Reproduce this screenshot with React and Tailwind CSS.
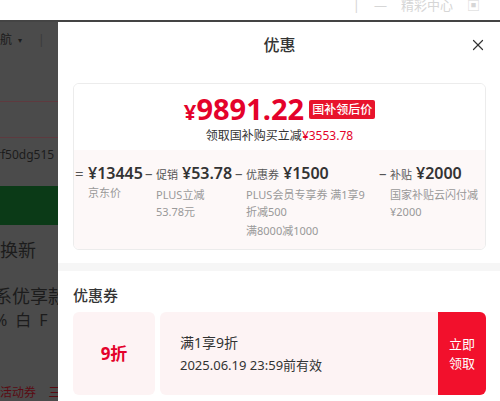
import { X } from 'lucide-react';

const font = { fontFamily: '"Noto Sans", "Noto Sans CJK SC", sans-serif' };

const parts = [
  {
    sign: '=',
    label: null,
    value: '¥13445',
    width: 'w-[56px]',
    notes: ['京东价'],
  },
  {
    sign: '–',
    label: '促销',
    value: '¥53.78',
    width: 'w-[78px]',
    notes: ['PLUS立减', '53.78元'],
  },
  {
    sign: '–',
    label: '优惠券',
    value: '¥1500',
    width: 'w-[132px]',
    notes: ['PLUS会员专享券 满1享9折减500'],
    extra: '满8000减1000',
  },
  {
    sign: '–',
    label: '补贴',
    value: '¥2000',
    width: 'w-[95px]',
    notes: ['国家补贴云闪付减', '¥2000'],
  },
];

function PageBehind() {
  return (
    <div className="flex w-[58px] shrink-0 flex-col overflow-hidden whitespace-nowrap bg-[#4b4b4b] text-[#1c1c1c]">
      <div className="flex h-[36px] items-center gap-[6px] pt-[1px] text-[12px]">
        <span>航</span>
        <span className="text-[8px]">▾</span>
        <span className="ml-[10px] text-[#3a3a3a]">|</span>
        <span className="ml-[8px]">号</span>
      </div>
      <div className="h-[44px]" />
      <div className="h-[1px] bg-[#5e3a3f]" />
      <div className="h-[35px]" />
      <div className="h-[1px] bg-[#5e3a3f]" />
      <div className="h-[48px] pt-[8px] text-[12px] leading-[18px] -ml-[4px]">rf50dg515</div>
      <div className="h-[39px] bg-[#0b3a17]" />
      <div className="flex h-[52px] items-center text-[18px]">换新</div>
      <div className="flex h-[32px] items-end text-[18px] leading-[24px] -ml-[6px]">系优享款</div>
      <div className="flex h-[24px] items-center gap-[8px] text-[16px] -ml-[6px]">
        <span>%</span>
        <span>白</span>
        <span>F</span>
      </div>
      <div className="h-[53px] shrink-0" />
      <div className="text-[12px] leading-[16px] text-[#5a0b13]">活动券 &nbsp;&nbsp; 三</div>
    </div>
  );
}

function PriceCard() {
  return (
    <div className="mt-[15px] overflow-hidden rounded-[6px] border border-[#ececec]">
      <div className="flex h-[66px] flex-col items-center bg-white">
        <div className="mt-[8px] flex h-[32px] items-center gap-[5px]">
          <span className="text-[#e4022b] font-bold leading-none">
            <span className="text-[22px]">¥</span>
            <span className="text-[29px]">9891.22</span>
          </span>
          <span className="mt-[3px] rounded-[2px] bg-[#e8142c] px-[3px] text-[12px] font-medium leading-[19px] text-white">
            国补领后价
          </span>
        </div>
        <div className="mt-[3px] text-[12px] leading-[18px] text-[#333]">
          领取国补购买立减<span className="text-[#e4022b]">¥3553.78</span>
        </div>
      </div>
      <div className="flex h-[99px] bg-[#fdf8f8] pt-[12px]">
        {parts.map((p) => (
          <div key={p.value} className="flex">
            <span className="w-[12px] pl-[1px] text-[15px] leading-[22px] text-[#555]">{p.sign}</span>
            <div className={`${p.width} ${p.sign === '=' ? 'ml-[2px]' : ''}`}>
              <div className="flex items-baseline gap-[4px] leading-[22px]">
                {p.label && <span className="text-[11px] text-[#555]">{p.label}</span>}
                <span className="text-[16px] font-semibold text-[#333]">{p.value}</span>
              </div>
              <div className="max-w-[124px] text-[11px] leading-[17px] text-[#999]">
                {p.notes.map((n) => (
                  <div key={n}>{n}</div>
                ))}
              </div>
              {p.extra && <div className="mt-[2px] text-[11px] leading-[17px] text-[#999]">{p.extra}</div>}
            </div>
          </div>
        ))}
      </div>
    </div>
  );
}

function Coupon() {
  return (
    <div className="mt-[7px] flex h-[83px]">
      <div className="flex w-[82px] items-center justify-center rounded-[6px] bg-[#fdf3f4] text-[17px] font-bold text-[#e4022b]">
        9折
      </div>
      <div className="ml-[5px] flex flex-1 flex-col justify-center rounded-l-[6px] bg-[#fdf3f4] pl-[20px] text-[#333]">
        <div className="text-[14px] leading-[22px]">满1享9折</div>
        <div className="text-[13px] leading-[22px]">2025.06.19 23:59前有效</div>
      </div>
      <div className="flex w-[48px] items-center justify-center rounded-r-[6px] bg-[#f2102c] text-center text-[13px] leading-[19px] text-white">
        立即
        <br />
        领取
      </div>
    </div>
  );
}

export default function App() {
  return (
    <div className="flex h-[401px] w-[500px] flex-col overflow-hidden bg-white" style={font}>
      <div className="flex h-[20px] items-start justify-end gap-[14px] overflow-hidden pr-[20px] text-[13px] leading-[10px] text-[#d6d6d6]">
        <span>|</span>
        <span>—</span>
        <span>精彩中心</span>
        <span>▣</span>
      </div>
      <div className="h-[2px] bg-[#444]" />
      <div className="flex flex-1 overflow-hidden">
        <PageBehind />
        <div className="flex flex-1 flex-col bg-white">
          <div className="relative flex h-[46px] items-center justify-center">
            <span className="text-[16px] font-medium text-[#333]">优惠</span>
            <X size={18} strokeWidth={1.6} className="absolute right-[14px] top-[14px] text-[#333]" />
          </div>
          <div className="px-[15px]">
            <PriceCard />
          </div>
          <div className="mt-[13px] h-[8px] bg-[#f6f6f6]" />
          <div className="px-[15px]">
            <div className="mt-[14px] text-[15px] font-medium leading-[20px] text-[#333]">优惠券</div>
            <Coupon />
          </div>
        </div>
      </div>
    </div>
  );
}
